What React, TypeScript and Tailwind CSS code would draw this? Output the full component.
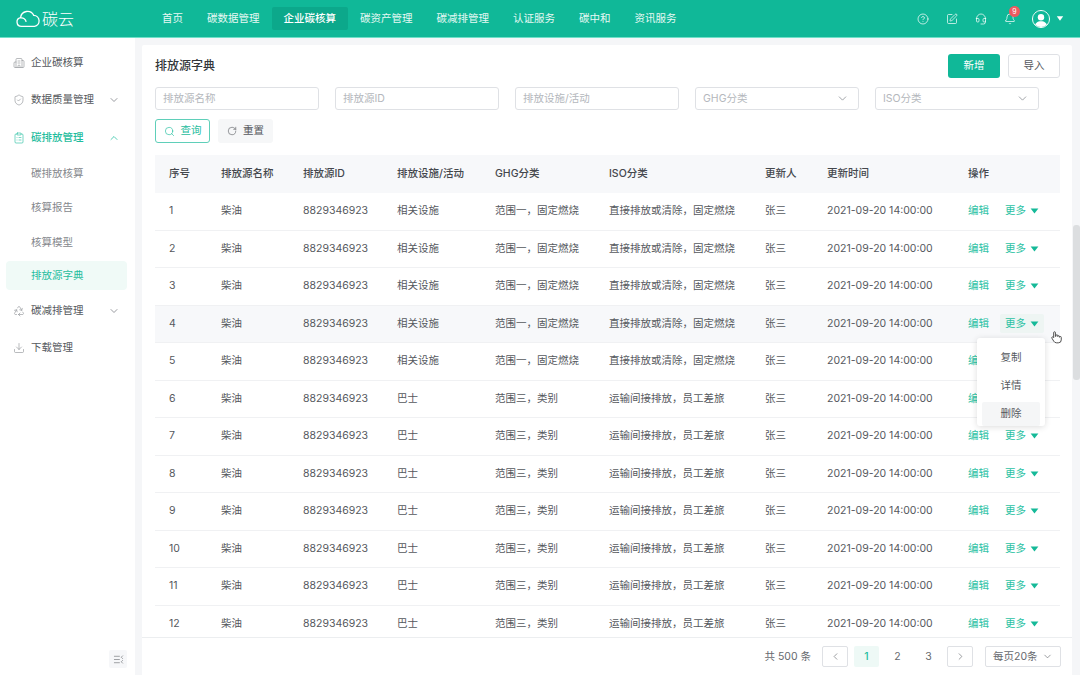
import { Building2, ShieldCheck, ClipboardList, ChevronDown, ChevronUp, ChevronLeft, ChevronRight, Search, RotateCw, Recycle, Download, CircleHelp, SquarePen, Headset, Bell, ListCollapse } from "lucide-react";

const F = "font-['Inter','Noto_Sans_CJK_SC',sans-serif]";
const navs = ["首页", "碳数据管理", "企业碳核算", "碳资产管理", "碳减排管理", "认证服务", "碳中和", "资讯服务"];
const heads = ["序号", "排放源名称", "排放源ID", "排放设施/活动", "GHG分类", "ISO分类", "更新人", "更新时间", "操作"];
const widths = ["w-[66px]", "w-[82px]", "w-[94px]", "w-[98px]", "w-[114px]", "w-[156px]", "w-[62px]", "w-[141px]", "w-[92px]"];
const rows = Array.from({ length: 12 }, (_, i) => i + 1);

function Caret({ className }: { className: string }) {
  return (
    <svg viewBox="0 0 10 7" className={className} fill="currentColor">
      <path d="M0.5 0.5h9L5 6.5z" />
    </svg>
  );
}

function Logo() {
  return (
    <svg viewBox="0 0 28 20" className="w-[26px] h-[19px]" fill="none" stroke="white" strokeWidth="1.4">
      <path d="M7 18.5a4.8 4.8 0 0 1-1-9.5 7.5 7.5 0 0 1 14.2-2.4A6 6 0 0 1 21 18.5z" />
      <path d="M6 9.5a5 5 0 0 1 6 4.2" />
    </svg>
  );
}

function Field({ label, select }: { label: string; select?: boolean }) {
  return (
    <div className="w-[164px] h-[23px] border border-[#dfe1e5] rounded-[3px] flex items-center justify-between pl-[7px] pr-[9px] text-[10.5px] text-[#b4b7bc]">
      <span>{label}</span>
      {select && <ChevronDown className="w-[13px] h-[13px] text-[#8d9095]" strokeWidth={1.5} />}
    </div>
  );
}

function SideItem({ icon, label, chevron, active }: { icon: React.ReactNode; label: string; chevron?: "up" | "down"; active?: boolean }) {
  return (
    <div className={`h-[37.5px] flex items-center pl-[13px] pr-[15px] text-[10.5px] ${active ? "text-[#1fbd9e] font-medium" : "text-[#55585d]"}`}>
      <span className="w-[18px] flex items-center">{icon}</span>
      <span className="flex-1">{label}</span>
      {chevron === "down" && <ChevronDown className="w-[12px] h-[12px] text-[#777a80]" strokeWidth={1.5} />}
      {chevron === "up" && <ChevronUp className="w-[12px] h-[12px] text-[#1fbd9e]" strokeWidth={1.5} />}
    </div>
  );
}

function More({ open }: { open?: boolean }) {
  return (
    <span className="relative ml-[11px] inline-block">
      <span className={`flex items-center gap-[4px] h-[19px] pl-[5px] pr-[5px] rounded-[2px] ${open ? "bg-[#eef5f3]" : ""}`}>
        <span>更多</span>
        <Caret className="w-[9px] h-[6px] text-[#15b998]" />
      </span>
      {open && (
        <div className="absolute z-10 left-[-23px] top-[24px] w-[68px] h-[88px] bg-white rounded-[3px] shadow-[0_1px_6px_rgba(0,0,0,0.14)] py-[6px] px-[5px] text-[#55585d] text-center">
          <div className="h-[28px] leading-[28px]">复制</div>
          <div className="h-[28px] leading-[28px]">详情</div>
          <div className="h-[24px] leading-[24px] mt-[2px] bg-[#f5f6f7] rounded-[2px]">删除</div>
        </div>
      )}
    </span>
  );
}

export default function App() {
  return (
    <div className={`${F} relative w-[1080px] h-[675px] overflow-hidden bg-[#f5f6f8] flex flex-col text-[#55585d]`}>
      <header className="h-[38px] shrink-0 bg-[#10b898] border-b border-[#6fe0c8] flex items-center text-white">
        <div className="w-[150px] flex items-center pl-[15px] gap-[1px]">
          <Logo />
          <span className="text-[16px] leading-none font-light">碳云</span>
        </div>
        <nav className="flex items-center text-[10.5px]">
          {navs.map((n) => (
            <span key={n} className={`px-3 h-[23px] leading-[23px] rounded-[2px] whitespace-nowrap ${n === "企业碳核算" ? "bg-[#0ca88b] font-medium" : "text-[#e6f8f4]"}`}>{n}</span>
          ))}
        </nav>
        <div className="ml-auto flex items-center pr-[16px]">
          <CircleHelp className="w-[12px] h-[12px]" strokeWidth={1.4} />
          <SquarePen className="w-[12px] h-[12px] ml-[17px]" strokeWidth={1.4} />
          <Headset className="w-[12px] h-[12px] ml-[17px]" strokeWidth={1.4} />
          <span className="relative ml-[17px]">
            <Bell className="w-[12px] h-[12px]" strokeWidth={1.4} />
            <span className="absolute -top-[7px] left-[5px] w-[11px] h-[11px] rounded-full bg-[#ee5a5f] text-[7px] leading-[11px] text-center">9</span>
          </span>
          <span className="ml-[16px] w-[18px] h-[18px] rounded-full bg-white border-[1.5px] border-white overflow-hidden relative bg-clip-padding">
            <svg viewBox="0 0 18 18" className="w-full h-full">
              <rect width="18" height="18" fill="#10b898" />
              <circle cx="9" cy="7" r="3.6" fill="white" />
              <path d="M2 18c0-4.5 3-6.5 7-6.5s7 2 7 6.5z" fill="white" />
            </svg>
          </span>
          <Caret className="w-[8px] h-[5px] ml-[6px] text-white" />
        </div>
      </header>

      <div className="flex-1 flex min-h-0">
        <aside className="w-[135px] shrink-0 bg-white flex flex-col pt-[6px] relative">
          <SideItem icon={<Building2 className="w-[12px] h-[12px] text-[#8a8d92]" strokeWidth={1.2} />} label="企业碳核算" />
          <SideItem icon={<ShieldCheck className="w-[12px] h-[12px] text-[#8a8d92]" strokeWidth={1.2} />} label="数据质量管理" chevron="down" />
          <SideItem active icon={<ClipboardList className="w-[12px] h-[12px] text-[#1fbd9e]" strokeWidth={1.2} />} label="碳排放管理" chevron="up" />
          <div className="text-[10.5px] text-[#85888d] flex flex-col">
            <div className="h-[34.5px] leading-[34.5px] pl-[31px]">碳排放核算</div>
            <div className="h-[34.5px] leading-[34.5px] pl-[31px]">核算报告</div>
            <div className="h-[34.5px] leading-[34.5px] pl-[31px]">核算模型</div>
            <div className="h-[29px] leading-[29px] pl-[25px] mx-[6px] mt-[1px] mb-[2px] w-[121px] bg-[#f0faf7] rounded-[4px] text-[#1fbd9e]">排放源字典</div>
          </div>
          <SideItem icon={<Recycle className="w-[12px] h-[12px] text-[#8a8d92]" strokeWidth={1.2} />} label="碳减排管理" chevron="down" />
          <SideItem icon={<Download className="w-[12px] h-[12px] text-[#8a8d92]" strokeWidth={1.2} />} label="下载管理" />
          <div className="mt-auto mb-[7px] mr-[8px] self-end w-[18px] h-[18px] bg-[#f6f7f9] rounded-[2px] flex items-center justify-center">
            <ListCollapse className="w-[11px] h-[11px] text-[#6d7075] -scale-x-100" strokeWidth={1.4} />
          </div>
        </aside>

        <main className="flex-1 min-w-0 flex pt-[7px] pl-[7px]">
          <div className="w-[930px] bg-white flex flex-col overflow-hidden rounded-t-[2px]">
            <div className="flex-1 min-h-0 overflow-hidden px-[13px] pt-[9px] pr-[12px]">
              <div className="flex items-center justify-between h-[24px]">
                <h1 className="text-[12px] font-medium text-[#33363a]">排放源字典</h1>
                <div className="flex gap-[8px] text-[10.5px]">
                  <button className="w-[52px] h-[24px] rounded-[3px] bg-[#10b898] text-white">新增</button>
                  <button className="w-[52px] h-[24px] rounded-[3px] border border-[#dfe1e5] text-[#55585d]">导入</button>
                </div>
              </div>
              <div className="flex gap-[16px] mt-[9px]">
                <Field label="排放源名称" />
                <Field label="排放源ID" />
                <Field label="排放设施/活动" />
                <Field label="GHG分类" select />
                <Field label="ISO分类" select />
              </div>
              <div className="flex gap-[8px] mt-[9px] text-[10.5px]">
                <button className="w-[55px] h-[24px] rounded-[3px] border border-[#5fcfb9] text-[#1fbd9e] flex items-center justify-center gap-[6px]">
                  <Search className="w-[11px] h-[11px]" strokeWidth={1.4} />查询
                </button>
                <button className="w-[55px] h-[24px] rounded-[3px] bg-[#f6f7f8] text-[#55585d] flex items-center justify-center gap-[6px]">
                  <RotateCw className="w-[10px] h-[10px]" strokeWidth={1.4} />重置
                </button>
              </div>
              <table className="table-fixed w-[905px] mt-[12px] text-[10.5px] border-collapse">
                <colgroup>
                  {widths.map((w) => <col key={w} className={w} />)}
                </colgroup>
                <thead>
                  <tr className="h-[37.5px] bg-[#f7f8fa] text-[#44474c]">
                    {heads.map((h, i) => (
                      <th key={h} className={`font-medium text-left whitespace-nowrap ${i === 0 ? "pl-[14px]" : ""}`}>{h}</th>
                    ))}
                  </tr>
                </thead>
                <tbody>
                  {rows.map((n) => {
                    const a = n <= 5;
                    return (
                      <tr key={n} className={`h-[37.5px] border-b border-[#f0f1f3] whitespace-nowrap ${n === 4 ? "bg-[#f7f8fa]" : ""}`}>
                        <td className="pl-[14px]">{n}</td>
                        <td>柴油</td>
                        <td>8829346923</td>
                        <td>{a ? "相关设施" : "巴士"}</td>
                        <td>{a ? "范围一，固定燃烧" : "范围三，类别"}</td>
                        <td>{a ? "直接排放或清除，固定燃烧" : "运输间接排放，员工差旅"}</td>
                        <td>张三</td>
                        <td>2021-09-20 14:00:00</td>
                        <td className="text-[#2cc2a4]">
                          <span className="inline-flex items-center">
                            <span>编辑</span>
                            <More open={n === 4} />
                          </span>
                        </td>
                      </tr>
                    );
                  })}
                </tbody>
              </table>
            </div>
            <footer className="h-[38px] shrink-0 border-t border-[#eceef0] flex items-center justify-end pr-[11px] text-[10.5px] text-[#66696e]">
              <span className="mr-[11px]">共 500 条</span>
              <span className="w-[26px] h-[21px] border border-[#dfe1e5] rounded-[2px] flex items-center justify-center"><ChevronLeft className="w-[11px] h-[11px]" strokeWidth={1.4} /></span>
              <span className="w-[25px] h-[21px] ml-[6px] bg-[#eef9f6] text-[#1fbd9e] font-medium rounded-[2px] text-center leading-[21px]">1</span>
              <span className="w-[31px] text-center ml-[3px]">2</span>
              <span className="w-[31px] text-center">3</span>
              <span className="w-[26px] h-[21px] ml-[3px] border border-[#dfe1e5] rounded-[2px] flex items-center justify-center"><ChevronRight className="w-[11px] h-[11px]" strokeWidth={1.4} /></span>
              <span className="w-[76px] h-[21px] ml-[12px] border border-[#dfe1e5] rounded-[2px] flex items-center justify-between px-[7px]">每页20条<ChevronDown className="w-[11px] h-[11px]" strokeWidth={1.4} /></span>
            </footer>
          </div>
          <div className="flex-1 relative">
            <div className="absolute right-0 top-[180px] w-[7px] h-[155px] bg-[#dcdee0] rounded-[3px]" />
          </div>
        </main>
      </div>

      <svg viewBox="0 0 24 24" className="absolute left-[1049px] top-[329px] w-[14px] h-[16px] z-20" fill="white" stroke="#444" strokeWidth="1.6" strokeLinejoin="round">
        <path d="M8 13V4.5a1.5 1.5 0 0 1 3 0V11l1-.2V9.5a1.5 1.5 0 0 1 3 .3v1.4a1.5 1.5 0 0 1 3 .3v1a1.5 1.5 0 0 1 3 .3V17a5 5 0 0 1-5 5h-3a6 6 0 0 1-5-3l-3-5a1.6 1.6 0 0 1 2.6-1.8z" />
      </svg>
    </div>
  );
}
